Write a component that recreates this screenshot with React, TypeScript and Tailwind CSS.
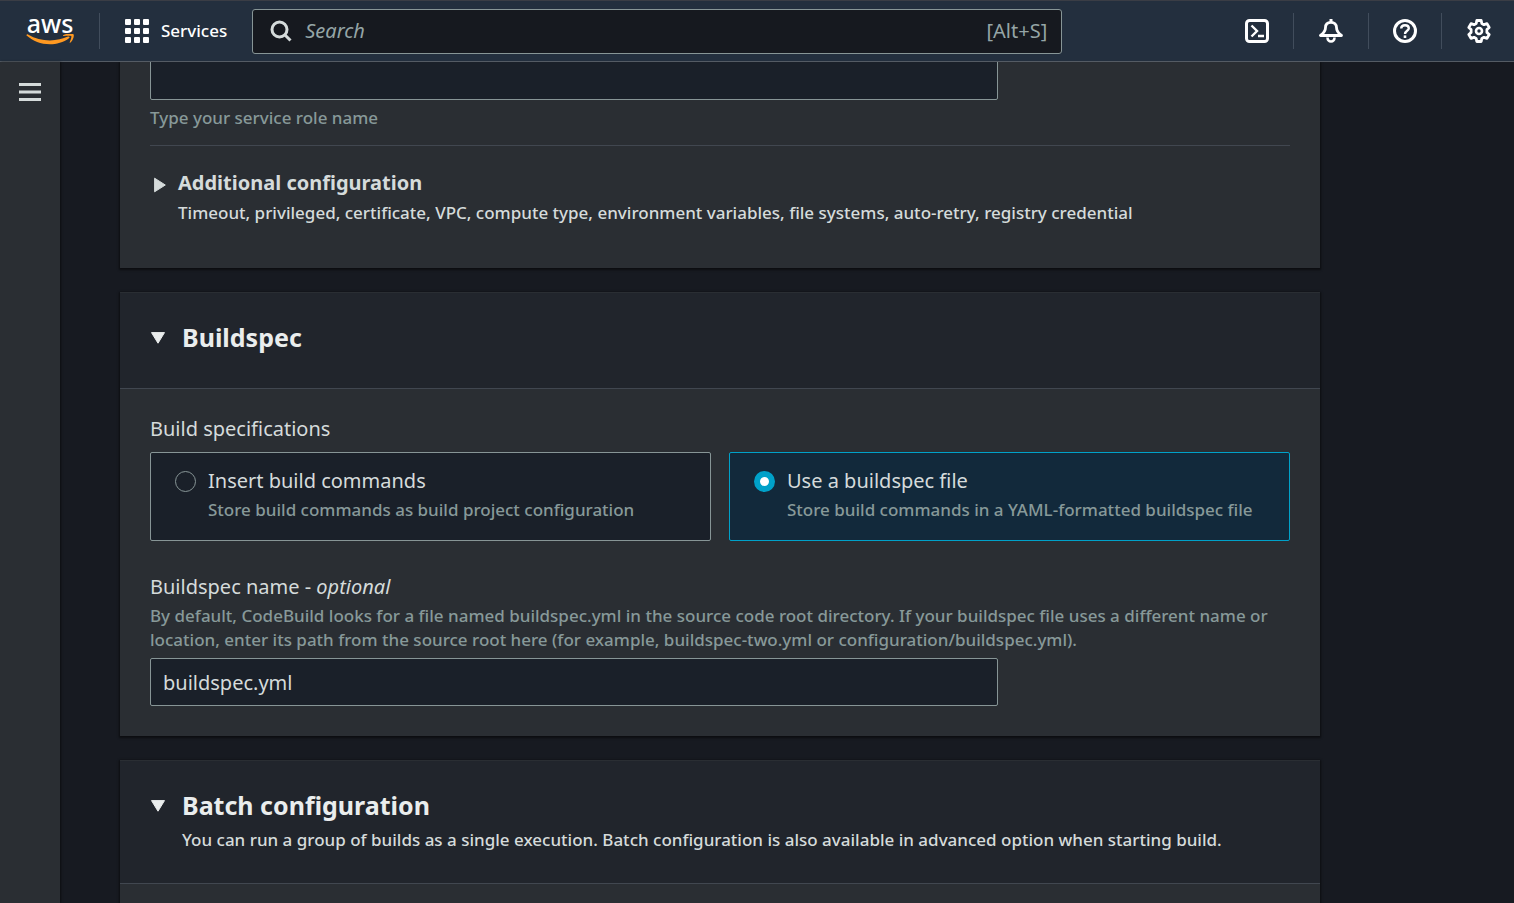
import { useState } from "react";
import type { ReactNode } from "react";

const card = "bg-[#2a2e33] shadow-[0_1px_2px_1px_rgba(0,0,0,0.5)]";
const hint = "text-[17px] leading-6 font-medium text-[#879999]";
const body = "text-[17px] leading-6 font-medium text-[#d5dbdb]";
const label = "text-xl leading-8 text-[#d5dbdb]";
const title = "text-[25px] leading-[39px] font-bold text-[#eaeded]";
const cardHeader = "border-t border-b border-t-[#2a2e33] border-b-[#414750] bg-[#21252c] px-[30px] pt-[25px] pb-[31px]";
const field =
  "block h-12 w-full max-w-[848px] rounded-xs border border-[#879596] bg-[#1a2029] px-3 text-xl text-[#d5dbdb] outline-none";

function Logo() {
  return (
    <a href="#home" aria-label="AWS console home" className="relative flex h-9 w-12 flex-col items-center">
      <span className="text-[25px] leading-5 font-medium text-white">aws</span>
      <svg viewBox="0 0 48 12" className="absolute top-[21px] left-0 h-3 w-12" fill="#ff9921" aria-hidden="true">
        <path d="M.5.9C.8.3 1.400.2 2 .6 9 4.700 16 6.400 24 6.400 30.500 6.400 37 5 42 2.600 43.300 2 44.300 3.300 43 4.200 37.600 8.200 30.300 10.300 24 10.300 14.800 10.300 6.800 7 .9 1.800.5 1.400.3 1.200.5.9Z" />
        <path d="M37.200 1.300C40.500-1 47-.7 47.600.4 48.300 1.500 47.300 6.300 44.500 8.600 44 9 43.500 8.700 43.700 8.200 44.400 6.500 45.900 3 45.200 2.100 44.500 1.300 40.500 1.700 37.700 2 37 2 36.700 1.700 37.200 1.300Z" />
      </svg>
    </a>
  );
}

function GridIcon() {
  return (
    <svg viewBox="0 0 24 24" className="size-6" fill="white" aria-hidden="true">
      {[0, 9, 18].map((y) =>
        [0, 9, 18].map((x) => <rect key={`${x}-${y}`} x={x} y={y} width="6" height="6" rx="1" />)
      )}
    </svg>
  );
}

function Stroke({ children }: { children: ReactNode }) {
  return (
    <svg
      viewBox="0 0 24 24"
      className="size-6"
      fill="none"
      stroke="white"
      strokeWidth="3"
      strokeLinejoin="round"
      aria-hidden="true"
    >
      {children}
    </svg>
  );
}

function Down() {
  return (
    <svg viewBox="0 0 16 12" className="h-3 w-4 shrink-0" fill="#eaeded" stroke="#eaeded" strokeLinejoin="round" aria-hidden="true">
      <path d="M1.500.6h13L8 11.200Z" />
    </svg>
  );
}

function Tile(props: { id: string; title: string; text: string; checked: boolean; onSelect: () => void }) {
  return (
    <label
      htmlFor={props.id}
      className={
        props.checked
          ? "flex flex-1 gap-3 rounded-xs border border-[#00a1c9] bg-[#12293b] px-6 pt-3 pb-[18px]"
          : "flex flex-1 gap-3 rounded-xs border border-[#879596] bg-[#1a2029] px-6 pt-3 pb-[18px]"
      }
    >
      <input
        id={props.id}
        type="radio"
        name="build-specifications"
        checked={props.checked}
        onChange={props.onSelect}
        className="mt-1.5 size-[21px] shrink-0 appearance-none rounded-full border border-[#879596] checked:border-[6px] checked:border-[#00a1c9] checked:bg-white"
      />
      <span className="flex flex-col gap-px">
        <span className={label}>{props.title}</span>
        <span className={hint}>{props.text}</span>
      </span>
    </label>
  );
}

function TopBar() {
  return (
    <header className="flex h-[62px] shrink-0 items-center justify-between border-t border-b border-t-[#3a3d45] border-b-[#545b64] bg-[#232f3e]">
      <div className="flex flex-1 items-center">
        <div className="flex h-9 items-center border-r border-[#414d5c] pr-[25px] pl-[26px]">
          <Logo />
        </div>
        <button type="button" className="flex items-center gap-3 px-[25px] text-[17px] font-medium text-white">
          <GridIcon />
          Services
        </button>
        <div className="flex h-[45px] max-w-[810px] flex-1 items-center rounded-[3px] border border-[#879596] bg-[#16191f] pr-3.5 pl-4">
          <svg viewBox="0 0 24 24" className="size-6" fill="none" stroke="#d5dbdb" strokeWidth="3" aria-hidden="true">
            <circle cx="10.5" cy="10.500" r="7.500" />
            <path d="m15.500 15.500 6 6" />
          </svg>
          <input
            aria-label="Search"
            placeholder="Search"
            className="ml-3 flex-1 bg-transparent text-xl text-[#d5dbdb] outline-none placeholder:text-[#95a5a6] placeholder:italic"
          />
          <span className="text-xl text-[#95a5a6]">[Alt+S]</span>
        </div>
      </div>
      <nav aria-label="Tools" className="flex items-center divide-x divide-[#414d5c]">
        <button type="button" aria-label="CloudShell" className="flex h-9 items-center px-6">
          <Stroke>
            <rect x="1.500" y="1.500" width="21" height="21" rx="3" />
            <path d="m6.500 6.500 5.500 5.500-5.500 5.500M13 17h6" strokeWidth="2.400" strokeLinejoin="miter" />
          </Stroke>
        </button>
        <button type="button" aria-label="Notifications" className="flex h-9 items-center px-[25px]">
          <Stroke>
            <path d="M1.500 16.500h21c-3.500-2.500-5-4.500-5-8C17.500 5.200 15.300 3.300 12 3.300S6.500 5.200 6.500 8.500c0 3.500-1.500 5.500-5 8Z" strokeWidth="2.800" />
            <path d="M12 0v4" />
            <path d="M8.500 18.500c0 2.300 1.500 4 3.500 4s3.500-1.700 3.500-4" strokeWidth="2.600" />
          </Stroke>
        </button>
        <button type="button" aria-label="Help" className="flex h-9 items-center px-6">
          <Stroke>
            <circle cx="12" cy="12" r="10.500" />
            <path d="M8.200 9.600C8.200 7.300 9.800 6.200 12 6.200s3.800 1.200 3.800 3.100c0 2.400-3.800 2.600-3.800 5.700" strokeWidth="2.400" />
            <path d="M12 16.400v2.600" strokeWidth="2.600" />
          </Stroke>
        </button>
        <button type="button" aria-label="Settings" className="flex h-9 items-center pr-[23px] pl-[25px]">
          <Stroke>
            <path
              d="m9.800 1.500-.6 3-2.200 1.200-3-1-2.200 3.700 2.300 2.200v2.800l-2.300 2.200L4 19.300l3-1 2.200 1.200.6 3h4.400l.6-3 2.200-1.200 3 1 2.200-3.700-2.300-2.200v-2.800l2.300-2.200L20 4.700l-3 1-2.200-1.200-.6-3Z"
              strokeWidth="2.800"
            />
            <circle cx="12" cy="12" r="3" strokeWidth="2.600" />
          </Stroke>
        </button>
      </nav>
    </header>
  );
}

export default function App() {
  const [spec, setSpec] = useState("file");
  return (
    <div className="flex h-screen flex-col overflow-hidden bg-[#171a21] font-['Noto_Sans','Open_Sans',sans-serif]">
      <TopBar />
      <div className="flex min-h-0 flex-1">
        <aside className="w-15 shrink-0 bg-[#2a2e33] shadow-[1px_0_2px_rgba(0,0,0,0.5)]">
          <button type="button" aria-label="Open navigation" className="flex w-full justify-center pt-[21px]">
            <svg viewBox="0 0 22 18" className="h-[18px] w-[22px]" fill="#d5dbdb" aria-hidden="true">
              <path d="M0 0h22v3H0zM0 7.500h22v3H0zM0 15h22v3H0z" />
            </svg>
          </button>
        </aside>
        <main className="min-w-0 flex-1 overflow-hidden px-15">
          <div className="flex max-w-[1200px] flex-col gap-6">
            <section className={`${card} flex h-[206px] flex-col justify-end px-[30px] pb-[43px]`}>
              <input id="role" aria-describedby="role-hint" aria-label="Role name" className={`${field} shrink-0`} />
              <p id="role-hint" className={`${hint} mt-1.5`}>Type your service role name</p>
              <hr className="mt-[15px] border-[#414750]" />
              <div className="mt-[21px] flex gap-3">
                <svg viewBox="0 0 12 16" className="mt-2.5 ml-1 h-4 w-3 shrink-0" fill="#d5dbdb" stroke="#d5dbdb" strokeLinejoin="round" aria-hidden="true">
                  <path d="M.6 1.200v13.600L11.300 8Z" />
                </svg>
                <div className="flex flex-col gap-0.5">
                  <h3 className={`${label} font-bold`}>
                    <button type="button">Additional configuration</button>
                  </h3>
                  <p className={body}>
                    Timeout, privileged, certificate, VPC, compute type, environment variables, file systems, auto-retry, registry
                    credential
                  </p>
                </div>
              </div>
            </section>

            <section className={card}>
              <div className={cardHeader}>
                <h2 className={title}>
                  <button type="button" className="flex items-center gap-4">
                    <Down />
                    Buildspec
                  </button>
                </h2>
              </div>
              <div className="px-[30px] pt-6 pb-[30px]">
                <fieldset>
                  <legend className={label}>Build specifications</legend>
                  <div className="mt-[7px] flex gap-[18px]">
                    <Tile
                      id="spec-insert"
                      title="Insert build commands"
                      text="Store build commands as build project configuration"
                      checked={spec === "insert"}
                      onSelect={() => setSpec("insert")}
                    />
                    <Tile
                      id="spec-file"
                      title="Use a buildspec file"
                      text="Store build commands in a YAML-formatted buildspec file"
                      checked={spec === "file"}
                      onSelect={() => setSpec("file")}
                    />
                  </div>
                </fieldset>
                <div className="mt-[30px] flex flex-col gap-px">
                  <label htmlFor="spec-name" className={label}>
                    Buildspec name - <i>optional</i>
                  </label>
                  <p id="spec-hint" className={hint}>
                    By default, CodeBuild looks for a file named buildspec.yml in the source code root directory. If your buildspec
                    file uses a different name or location, enter its path from the source root here (for example,
                    buildspec-two.yml or configuration/buildspec.yml).
                  </p>
                </div>
                <input id="spec-name" aria-describedby="spec-hint" defaultValue="buildspec.yml" className={`${field} mt-1.5`} />
              </div>
            </section>

            <section className={`${card} h-60 shrink-0`}>
              <div className={cardHeader}>
                <h2 className={title}>
                  <button type="button" className="flex items-center gap-4">
                    <Down />
                    Batch configuration
                  </button>
                </h2>
                <p className={`${body} mt-[3px] ml-8`}>
                  You can run a group of builds as a single execution. Batch configuration is also available in advanced option when
                  starting build.
                </p>
              </div>
            </section>
          </div>
        </main>
      </div>
    </div>
  );
}
